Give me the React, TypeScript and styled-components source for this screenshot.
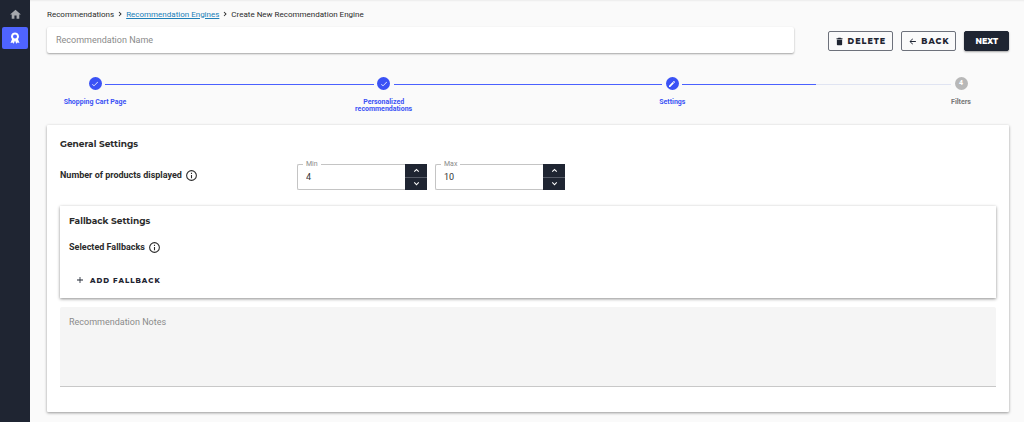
import React, { useState } from "react";
import styled, { createGlobalStyle } from "styled-components";

const ink = "#1f2532";
const blue = "#3a52f5";
const heading = 'Montserrat, Inter, sans-serif';

const Global = createGlobalStyle`
  *, *::before, *::after { box-sizing: border-box; }
  body {
    margin: 0;
    background: #fafafa;
    color: #2b2b2b;
    font-family: Roboto, sans-serif;
  }
  button, input, textarea { font: inherit; }
`;

const Shell = styled.div`
  display: flex;
  min-height: 100vh;
`;

const Sidebar = styled.nav`
  flex: none;
  width: 30px;
  padding: 2px;
  background: ${ink};
`;

const NavItem = styled.a<{ $active?: boolean }>`
  display: flex;
  align-items: center;
  justify-content: center;
  height: ${(p) => (p.$active ? 22 : 25)}px;
  border-radius: 2px;
  background: ${(p) => (p.$active ? "#4f64ff" : "transparent")};
  color: ${(p) => (p.$active ? "#fff" : "#a6a8ad")};
`;

const Main = styled.main`
  flex: 1;
  min-width: 0;
  padding: 8px 15px 10px 17px;
  box-shadow: inset 0 2px 2px -1px rgba(0, 0, 0, 0.06);
`;

const Crumbs = styled.nav`
  display: flex;
  align-items: center;
  gap: 2px;
  height: 12px;
  font-size: 8px;
`;

const CrumbLink = styled.a`
  color: #2080b8;
  text-decoration: underline;
`;

const TopBar = styled.div`
  display: flex;
  align-items: center;
  gap: 34px;
  margin-top: 7px;
`;

const NameInput = styled.input`
  flex: 1;
  min-width: 0;
  height: 26px;
  padding: 0 9px;
  border: 0;
  border-radius: 2px;
  background: #fff;
  box-shadow: 0 1px 2px rgba(0, 0, 0, 0.35);
  font-size: 9px;
  &::placeholder { color: #8b8b8b; }
`;

const Actions = styled.div`
  display: flex;
  gap: 8px;
  padding-top: 2px;
`;

const Button = styled.button<{ $kind?: "solid" | "text" }>`
  display: inline-flex;
  align-items: center;
  gap: ${(p) => (p.$kind === "text" ? 6 : 4)}px;
  height: 20px;
  padding: 0 ${(p) => (p.$kind === "solid" ? 10 : 6)}px;
  border: 1px solid ${(p) => (p.$kind === "text" ? "transparent" : p.$kind === "solid" ? ink : "#6d717b")};
  border-radius: 2px;
  background: ${(p) => (p.$kind === "solid" ? ink : "transparent")};
  color: ${(p) => (p.$kind === "solid" ? "#fff" : ink)};
  box-shadow: ${(p) => (p.$kind === "solid" ? "0 1px 2px rgba(0, 0, 0, 0.35)" : "none")};
  font-family: ${heading};
  font-size: ${(p) => (p.$kind === "text" ? 7 : 8)}px;
  font-weight: 800;
  letter-spacing: ${(p) => (p.$kind === "solid" ? 0 : 1)}px;
  text-transform: uppercase;
  white-space: nowrap;
`;

const Stepper = styled.ol`
  display: grid;
  grid-template-columns: 96px 1fr 96px 1fr 96px 1fr 96px;
  margin: 24px 0 0;
  padding: 0;
  list-style: none;
`;

const Step = styled.li<{ $pending?: boolean }>`
  display: flex;
  flex-direction: column;
  align-items: center;
  gap: 9px;
  height: 48px;
  color: ${(p) => (p.$pending ? "#777" : blue)};
  font-size: 7px;
  font-weight: 700;
  line-height: 7px;
  text-align: center;
`;

const StepDot = styled.span<{ $pending?: boolean }>`
  display: flex;
  align-items: center;
  justify-content: center;
  width: 13px;
  height: 13px;
  border-radius: 50%;
  background: ${(p) => (p.$pending ? "#b8b8b8" : blue)};
  color: #fff;
`;

const StepLabel = styled.span`
  width: 72px;
`;

const Connector = styled.li<{ $half?: boolean }>`
  height: 1px;
  margin: 7px -38px 0;
  background: ${(p) => (p.$half ? "linear-gradient(to right, #4a60ff 50%, #e0e4f2 50%)" : "#4a60ff")};
`;

const Card = styled.section`
  padding: 13px 13px 25px;
  background: #fff;
  border-radius: 1px;
  box-shadow: 0 1px 3px rgba(0, 0, 0, 0.4);
`;

const Title = styled.h2`
  margin: 0;
  font-family: ${heading};
  font-size: 9px;
  font-weight: 700;
  line-height: 12px;
`;

const SettingRow = styled.div`
  display: grid;
  grid-template-columns: 229px 130px 130px;
  gap: 8px;
  margin-top: 14px;
`;

const Caption = styled.div`
  display: flex;
  align-items: center;
  gap: 3px;
  height: 22px;
  font-size: 9px;
  font-weight: 700;
  line-height: 12px;
`;

const NumberBox = styled.div`
  position: relative;
  display: flex;
  height: 26px;
`;

const NumberLabel = styled.label`
  position: absolute;
  top: -4px;
  left: 6px;
  padding: 0 3px;
  background: #fff;
  color: #8a8a8a;
  font-size: 7px;
  line-height: 8px;
`;

const NumberInput = styled.input`
  flex: 1;
  min-width: 0;
  padding: 0 8px;
  border: 1px solid #c4c4c4;
  border-right: 0;
  border-radius: 2px 0 0 2px;
  background: #fff;
  color: #333;
  font-size: 9px;
  appearance: textfield;
  &::-webkit-inner-spin-button { appearance: none; margin: 0; }
`;

const Spin = styled.div`
  display: grid;
  width: 22px;
  grid-template-rows: 1fr 1fr;
  gap: 1px;
  background: #555a66;
`;

const SpinButton = styled.button`
  display: flex;
  align-items: center;
  justify-content: center;
  padding: 0;
  border: 0;
  background: ${ink};
  color: #fff;
`;

const Fallback = styled.section`
  display: flex;
  flex-direction: column;
  align-items: flex-start;
  margin-top: 16px;
  padding: 9px 9px 8px;
  background: #fff;
  box-shadow: 0 1px 3px rgba(0, 0, 0, 0.45);
  ${Caption} { margin: 9px 0 12px; }
`;

const Notes = styled.textarea`
  display: block;
  width: 100%;
  height: 80px;
  margin-top: 9px;
  padding: 9px;
  border: 0;
  border-bottom: 1px solid #c8c8c8;
  border-radius: 2px 2px 0 0;
  background: #f5f5f5;
  font-size: 9px;
  line-height: 12px;
  resize: none;
  &::placeholder { color: #8b8b8b; }
`;

const Glyph = ({ d, size }: { d: string; size: number }) => (
  <svg width={size} height={size} viewBox="0 0 24 24" fill="currentColor" aria-hidden="true">
    <path d={d} fillRule="evenodd" />
  </svg>
);

const icons = {
  home: "M10 20v-6h4v6h5v-8h3L12 3 2 12h3v8z",
  award: "M12 1a8 8 0 0 0-6 13.300L3 22l4-1 2.500 2.500L12 17l2.500 6.500L17 21l4 1-3-7.700A8 8 0 0 0 12 1zm0 4a4 4 0 1 1 0 8 4 4 0 0 1 0-8z",
  check: "M9 16.170 4.830 12l-1.420 1.410L9 19 21 7l-1.410-1.410z",
  pencil: "M3 17.250V21h3.750L17.810 9.940l-3.750-3.750zM20.710 7.040a1 1 0 0 0 0-1.410l-2.340-2.340a1 1 0 0 0-1.410 0l-1.830 1.830 3.750 3.750z",
  trash: "M5 7h14v13a2 2 0 0 1-2 2H7a2 2 0 0 1-2-2zM4 3h4l1-1h6l1 1h4v3H4z",
  back: "M21 10.800H7.830l5.590-5.390L12 4l-8 8 8 8 1.410-1.410L7.830 13.200H21z",
  plus: "M21 13.200h-7.800V21h-2.400v-7.800H3v-2.400h7.800V3h2.400v7.800H21z",
  up: "M12 7l-7 7 2 2 5-5 5 5 2-2z",
  down: "M12 17l7-7-2-2-5 5-5-5-2 2z",
  info: "M11 7h2v2h-2zm0 4h2v6h-2zm1-9a10 10 0 1 0 0 20 10 10 0 0 0 0-20zm0 18a8 8 0 1 1 0-16 8 8 0 0 1 0 16z",
  chevron: "M10 5 8 7l5 5-5 5 2 2 7-7z",
};

const Stepped = ({ id, label, initial }: { id: string; label: string; initial: number }) => {
  const [value, setValue] = useState(initial);
  return (
    <NumberBox>
      <NumberInput id={id} type="number" value={value} onChange={(e) => setValue(Number(e.target.value))} />
      <NumberLabel htmlFor={id}>{label}</NumberLabel>
      <Spin>
        <SpinButton type="button" aria-label={`Increase ${label}`} onClick={() => setValue(value + 1)}>
          <Glyph d={icons.up} size={9} />
        </SpinButton>
        <SpinButton type="button" aria-label={`Decrease ${label}`} onClick={() => setValue(value - 1)}>
          <Glyph d={icons.down} size={9} />
        </SpinButton>
      </Spin>
    </NumberBox>
  );
};

export default function App() {
  return (
    <>
      <Global />
      <Shell>
        <Sidebar aria-label="Main">
          <NavItem href="#home" aria-label="Home"><Glyph d={icons.home} size={13} /></NavItem>
          <NavItem href="#recommendations" aria-label="Recommendations" $active><Glyph d={icons.award} size={12} /></NavItem>
        </Sidebar>
        <Main>
          <Crumbs aria-label="Breadcrumb">
            <span>Recommendations</span>
            <Glyph d={icons.chevron} size={8} />
            <CrumbLink href="#engines">Recommendation Engines</CrumbLink>
            <Glyph d={icons.chevron} size={8} />
            <span>Create New Recommendation Engine</span>
          </Crumbs>
          <TopBar>
            <NameInput aria-label="Recommendation Name" placeholder="Recommendation Name" />
            <Actions>
              <Button type="button"><Glyph d={icons.trash} size={9} />Delete</Button>
              <Button type="button"><Glyph d={icons.back} size={9} />Back</Button>
              <Button type="button" $kind="solid">Next</Button>
            </Actions>
          </TopBar>
          <Stepper>
            <Step><StepDot><Glyph d={icons.check} size={8} /></StepDot><StepLabel>Shopping Cart Page</StepLabel></Step>
            <Connector aria-hidden="true" />
            <Step><StepDot><Glyph d={icons.check} size={8} /></StepDot><StepLabel>Personalized recommendations</StepLabel></Step>
            <Connector aria-hidden="true" />
            <Step aria-current="step"><StepDot><Glyph d={icons.pencil} size={8} /></StepDot><StepLabel>Settings</StepLabel></Step>
            <Connector aria-hidden="true" $half />
            <Step $pending><StepDot $pending>4</StepDot><StepLabel>Filters</StepLabel></Step>
          </Stepper>
          <Card>
            <Title>General Settings</Title>
            <SettingRow>
              <Caption>Number of products displayed<Glyph d={icons.info} size={13} /></Caption>
              <Stepped id="min" label="Min" initial={4} />
              <Stepped id="max" label="Max" initial={10} />
            </SettingRow>
            <Fallback>
              <Title>Fallback Settings</Title>
              <Caption>Selected Fallbacks<Glyph d={icons.info} size={13} /></Caption>
              <Button type="button" $kind="text"><Glyph d={icons.plus} size={8} />Add Fallback</Button>
            </Fallback>
            <Notes aria-label="Recommendation Notes" placeholder="Recommendation Notes" />
          </Card>
        </Main>
      </Shell>
    </>
  );
}
